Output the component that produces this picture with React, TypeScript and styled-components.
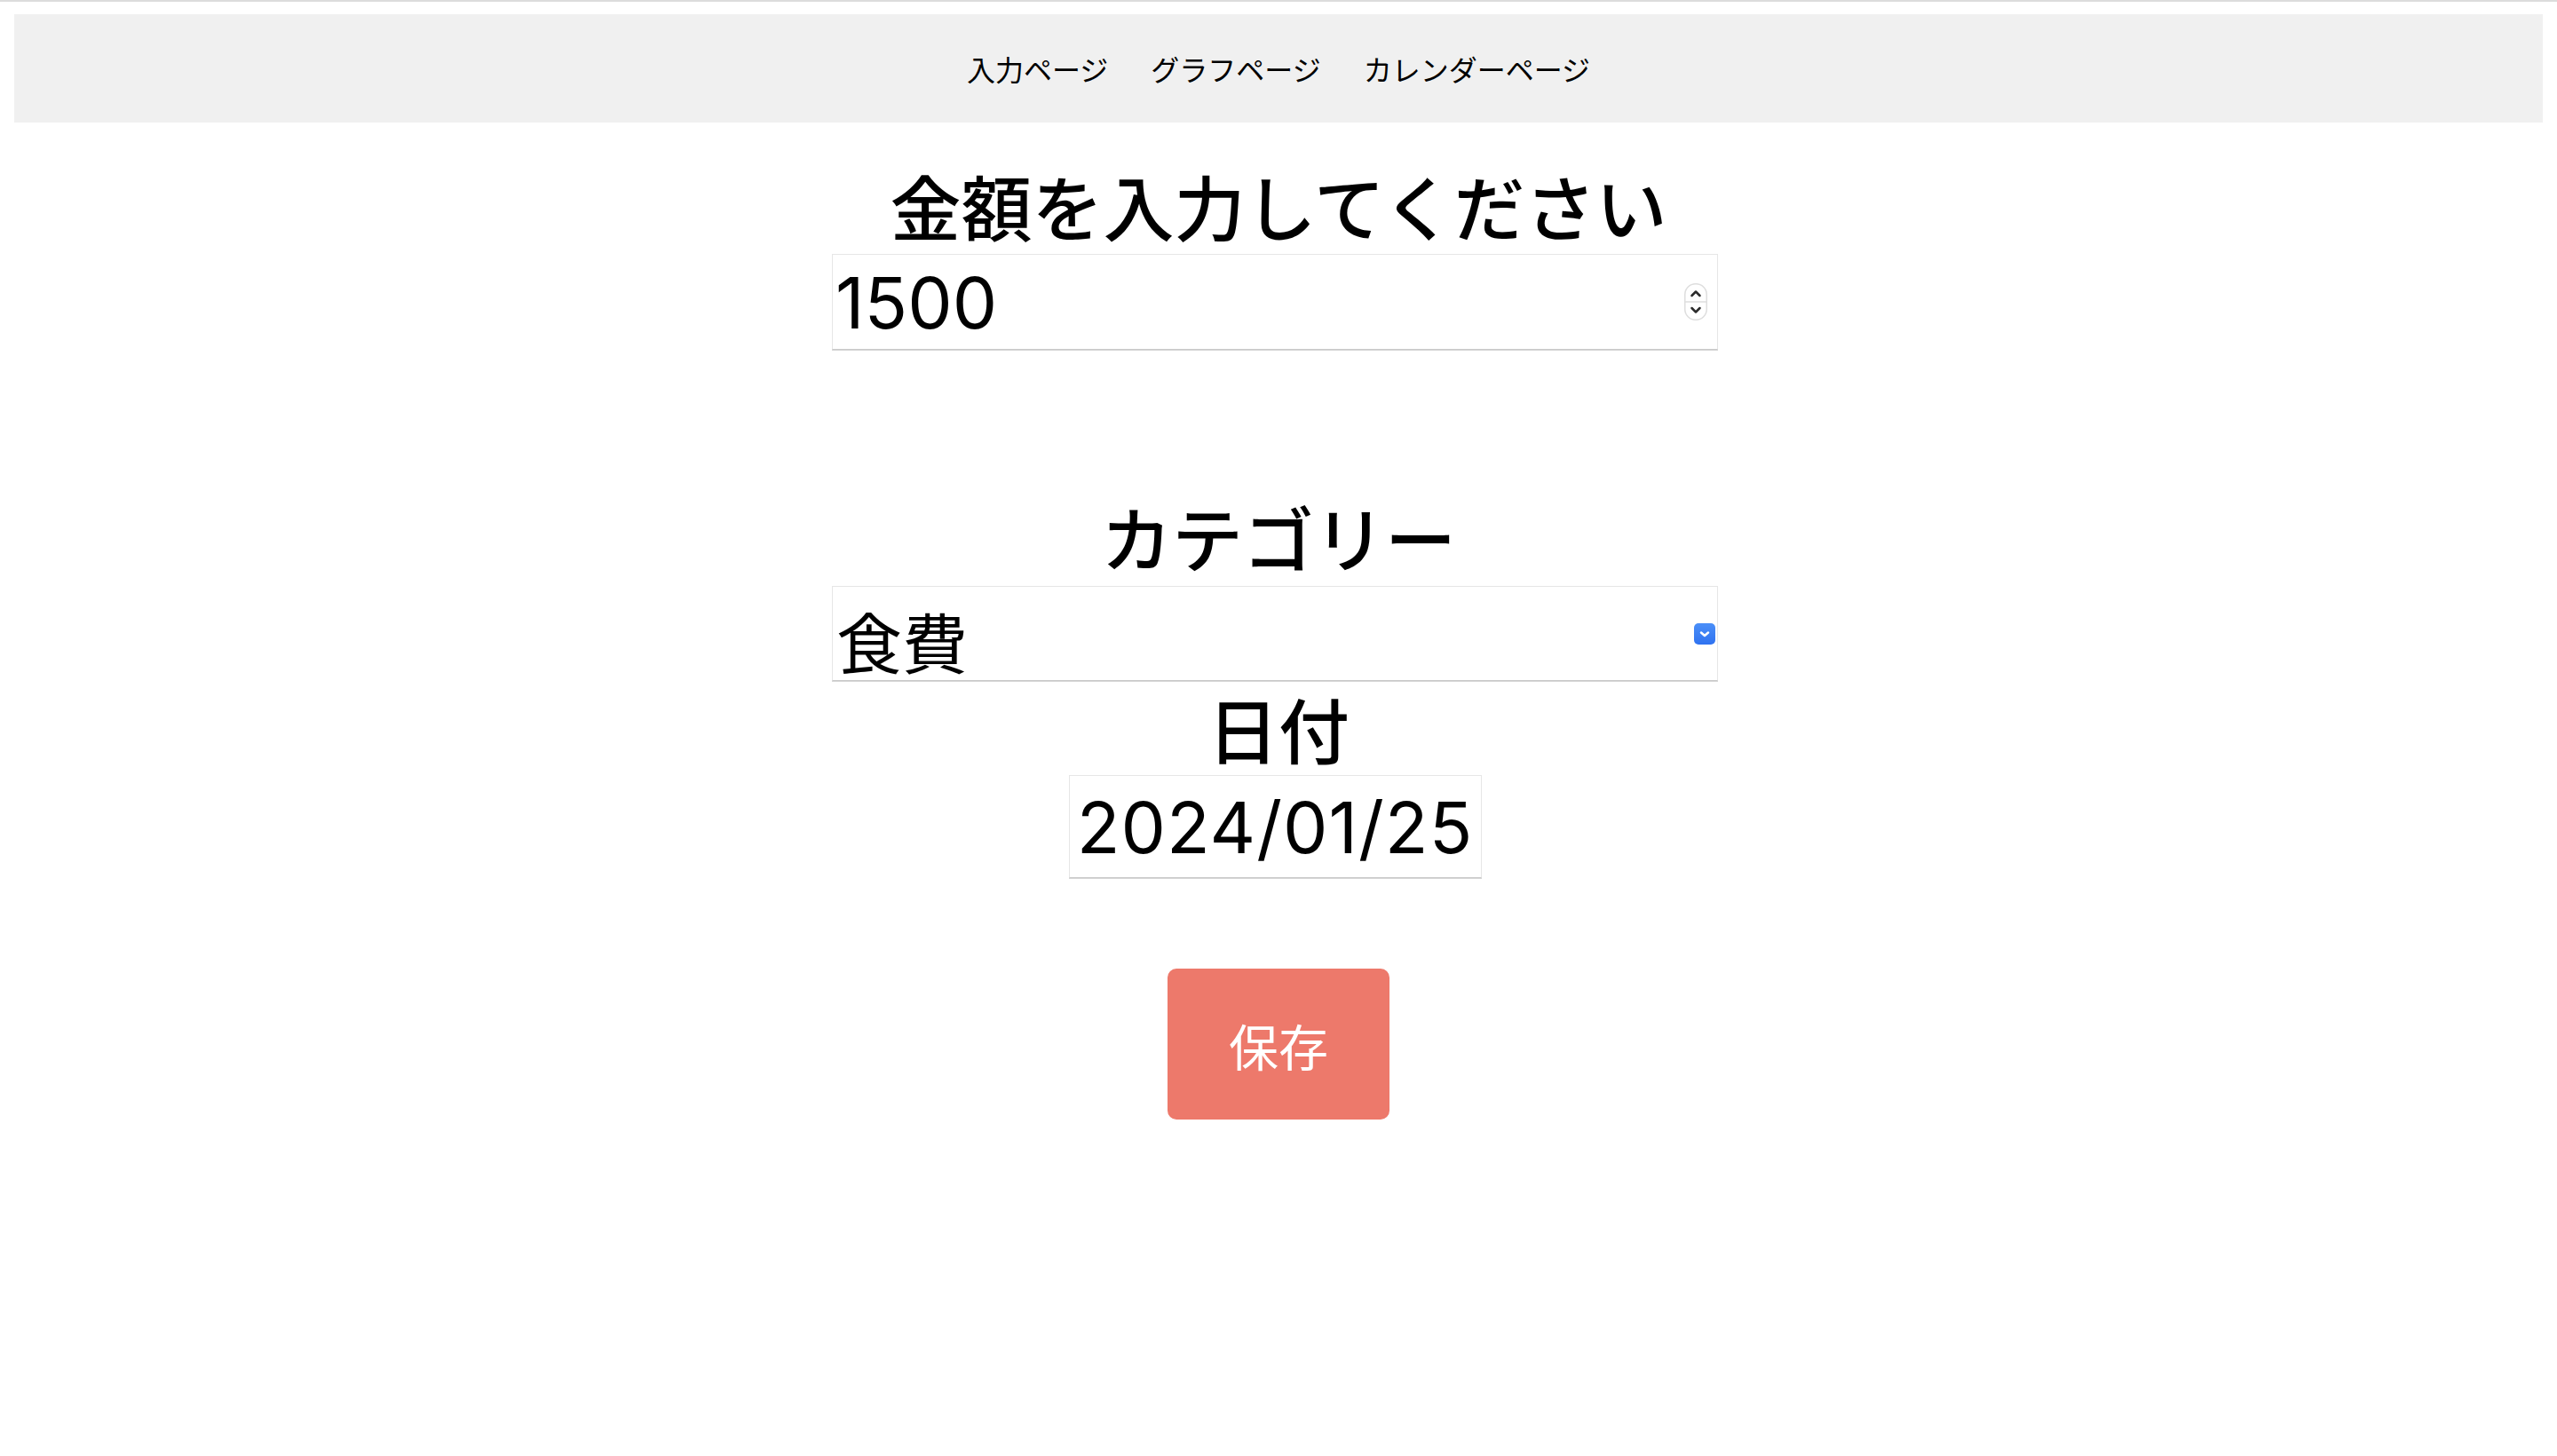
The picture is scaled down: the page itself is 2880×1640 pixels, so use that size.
import React, { useState } from 'react';
import styled, { createGlobalStyle } from 'styled-components';

const GlobalStyle = createGlobalStyle`
  html {
    border-top: 2px solid #dcdcdc;
    background: #ffffff;
  }

  body {
    margin: 14px 16px 16px;
    font-family: "Noto Sans CJK JP", "Noto Sans", sans-serif;
    color: #000;
  }
`;

const NavBar = styled.nav`
  height: 122px;
  background-color: #f0f0f0;
  display: flex;
  justify-content: center;
  align-items: center;
  gap: 48px;
`;

const NavLink = styled.a`
  font-size: 32px;
  line-height: 32px;
  color: #000;
  text-decoration: none;
  cursor: pointer;
`;

const Main = styled.main`
  display: flex;
  flex-direction: column;
  align-items: center;
`;

const Heading = styled.h2<{ $top: number }>`
  margin: ${props => props.$top}px 0 0;
  font-size: 80px;
  line-height: 80px;
  font-weight: 500;
  text-align: center;
`;

const FieldBox = styled.div<{ $top: number; $height: number }>`
  margin: ${props => props.$top}px 8px 0 0;
  width: 998px;
  height: ${props => props.$height}px;
  display: flex;
  align-items: center;
  background: #fff;
  border: 1px solid #e6e6e6;
  border-bottom-color: #c9c9c9;
  box-shadow: 0 1px 0 #d6d6d6;
  box-sizing: border-box;
`;

const NumberInput = styled.input`
  flex: 1;
  min-width: 0;
  border: none;
  outline: none;
  background: transparent;
  padding: 0 0 0 3px;
  font-family: Inter, "Liberation Sans", sans-serif;
  font-size: 80px;
  color: #000;

  &::-webkit-outer-spin-button,
  &::-webkit-inner-spin-button {
    -webkit-appearance: none;
    margin: 0;
  }
  -moz-appearance: textfield;
`;

const Select = styled.select`
  flex: 1;
  min-width: 0;
  height: 100%;
  border: none;
  outline: none;
  background: transparent;
  appearance: none;
  padding: 6px 0 0 4px;
  font-family: "Noto Sans CJK JP", sans-serif;
  font-size: 74px;
  color: #000;
  cursor: pointer;
`;

const SideIcon = styled.svg<{ $right: number }>`
  flex: none;
  margin-right: ${props => props.$right}px;
  pointer-events: none;
`;

const DateInput = styled.input`
  margin: 14px 8px 0 0;
  width: 465px;
  height: 116px;
  box-sizing: border-box;
  border: 1px solid #e6e6e6;
  border-bottom-color: #c9c9c9;
  box-shadow: 0 1px 0 #d6d6d6;
  outline: none;
  padding: 0;
  text-align: center;
  font-family: Inter, "Liberation Sans", sans-serif;
  font-size: 80px;
  letter-spacing: 1px;
  color: #000;
`;

const SaveButton = styled.button`
  margin-top: 102px;
  width: 250px;
  height: 170px;
  border: none;
  border-radius: 10px;
  background-color: #ed796b;
  color: #fff;
  font-family: "Noto Sans CJK JP", sans-serif;
  font-size: 56px;
  cursor: pointer;

  &:hover {
    background-color: #e86a5b;
  }
`;

const Spinner = () => (
  <SideIcon $right={11} width="26" height="42" viewBox="0 0 26 42">
    <rect x="0.75" y="0.75" width="24.5" height="40.5" rx="12" fill="#fff" stroke="#dedede" strokeWidth="1.5" />
    <line x1="1" y1="21" x2="25" y2="21" stroke="#dedede" strokeWidth="1.5" />
    <path d="M8.5 14 L13 9.5 L17.5 14" fill="none" stroke="#2b2b2b" strokeWidth="2.5" strokeLinecap="round" strokeLinejoin="round" />
    <path d="M8.5 28 L13 32.5 L17.5 28" fill="none" stroke="#2b2b2b" strokeWidth="2.5" strokeLinecap="round" strokeLinejoin="round" />
  </SideIcon>
);

const SelectArrow = () => (
  <SideIcon $right={2} width="24" height="24" viewBox="0 0 24 24">
    <defs>
      <linearGradient id="arrowBg" x1="0" y1="0" x2="0" y2="1">
        <stop offset="0" stopColor="#4b8ff8" />
        <stop offset="1" stopColor="#2f72f0" />
      </linearGradient>
    </defs>
    <rect x="0" y="0" width="24" height="24" rx="5" fill="url(#arrowBg)" />
    <path d="M8 10.5 L12 14 L16 10.5" fill="none" stroke="#fff" strokeWidth="2.5" strokeLinecap="round" strokeLinejoin="round" />
  </SideIcon>
);

const App: React.FC = () => {
  const [amount, setAmount] = useState('1500');
  const [category, setCategory] = useState('食費');
  const [date, setDate] = useState('2024/01/25');

  return (
    <>
      <GlobalStyle />
      <NavBar>
        <NavLink>入力ページ</NavLink>
        <NavLink>グラフページ</NavLink>
        <NavLink>カレンダーページ</NavLink>
      </NavBar>

      <Main>
        <Heading $top={52}>金額を入力してください</Heading>
        <FieldBox $top={16} $height={108}>
          <NumberInput
            type="number"
            value={amount}
            onChange={(e) => setAmount(e.target.value)}
          />
          <Spinner />
        </FieldBox>

        <Heading $top={169}>カテゴリー</Heading>
        <FieldBox $top={17} $height={107}>
          <Select value={category} onChange={(e) => setCategory(e.target.value)}>
            <option value="食費">食費</option>
            <option value="日用品">日用品</option>
            <option value="交通費">交通費</option>
            <option value="娯楽">娯楽</option>
            <option value="その他">その他</option>
          </Select>
          <SelectArrow />
        </FieldBox>

        <Heading $top={12}>日付</Heading>
        <DateInput type="text" value={date} onChange={(e) => setDate(e.target.value)} />

        <SaveButton>保存</SaveButton>
      </Main>
    </>
  );
};

export default App;
